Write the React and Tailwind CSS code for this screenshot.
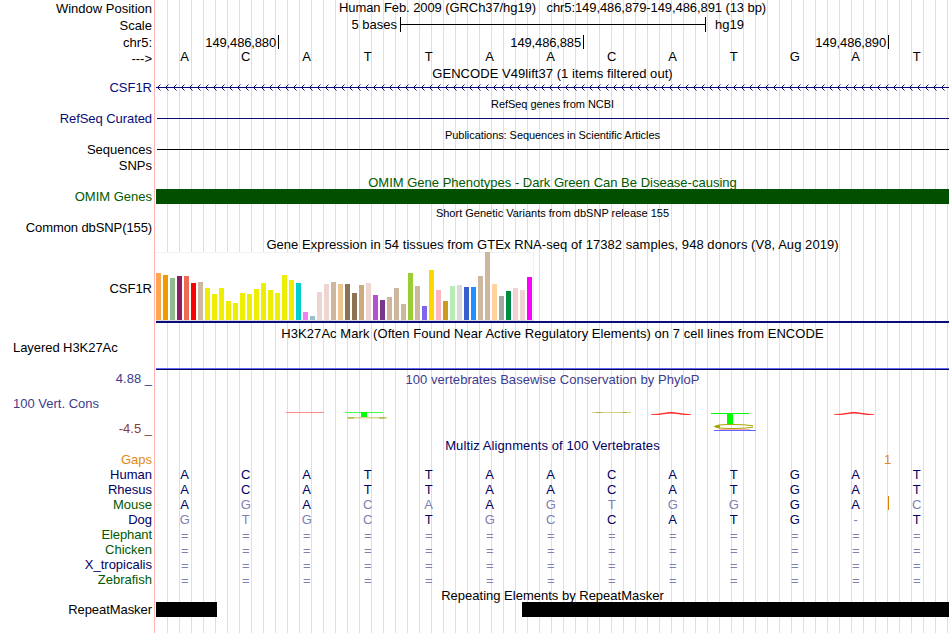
import React from "react";

const labels = [
  ["Window Position", "h-[17px]", "text-black"],
  ["Scale", "h-[17px]", "text-black"],
  ["chr5:", "h-[16px]", "text-black"],
  ["--->", "h-[29px]", "text-black"],
  ["CSF1R", "h-[31px]", "text-[#0c0c78]"],
  ["RefSeq Curated", "h-[31px] tracking-[-0.07px]", "text-[#0c0c78]"],
  ["Sequences", "h-[16px]", "text-black"],
  ["SNPs", "h-[31px]", "text-black"],
  ["OMIM Genes", "h-[31px]", "text-[#005a00]"],
  ["Common dbSNP(155)", "h-[61px] tracking-[-0.1px]", "text-black"],
  ["CSF1R", "h-[59px]", "text-black"],
  ["Layered H3K27Ac", "h-[31px] pl-[13px] tracking-[-0.06px]", "text-black", true],
  ["4.88 _", "h-[25px]", "text-[#3c3c8c]"],
  ["100 Vert. Cons", "h-[25px] pl-[13px]", "text-[#3c3c8c]", true],
  ["-4.5 _", "h-[31px]", "text-[#8c3c3c]"],
  ["Gaps", "h-[15px]", "text-[#e08a10]"],
  ["Human", "h-[15px]", "text-[#000064]"],
  ["Rhesus", "h-[15px]", "text-[#000064]"],
  ["Mouse", "h-[15px]", "text-[#005a00]"],
  ["Dog", "h-[15px]", "text-[#000064]"],
  ["Elephant", "h-[15px] tracking-[-0.1px]", "text-[#005a00]"],
  ["Chicken", "h-[15px]", "text-[#005a00]"],
  ["X_tropicalis", "h-[15px]", "text-[#000064]"],
  ["Zebrafish", "h-[30px]", "text-[#005a00]"],
  ["RepeatMasker", "h-[15px] tracking-[-0.06px]", "text-black"],
];

const human = "ACATTAACATGAT";

// Upper case marks a base identical to human; lower case marks a mismatch.
const alignments = [
  "ACATTAACATGAT",
  "ACATTAACATGAT",
  "AgAcaAgtggGAc",
  "gtgcTgcCATG-T",
  "=============",
  "=============",
  "=============",
  "=============",
];

const tissues = [
  [47, "#ffa54f"], [45, "#ee9a00"], [42, "#8fbc8f"], [44, "#8b1c62"], [44, "#ee6a50"],
  [37, "#ff0000"], [38, "#cdb79e"], [32, "#eeee00"], [26, "#eeee00"], [32, "#eeee00"],
  [19, "#eeee00"], [17, "#eeee00"], [27, "#eeee00"], [26, "#eeee00"], [31, "#eeee00"],
  [37, "#eeee00"], [30, "#eeee00"], [27, "#eeee00"], [45, "#eeee00"], [40, "#eeee00"],
  [37, "#00cdcd"], [8, "#ee82ee"], [4, "#9ac0cd"], [28, "#eed5d2"], [36, "#eed5d2"],
  [38, "#cdb79e"], [36, "#eec591"], [36, "#8b7355"], [27, "#8b7355"], [35, "#cdaa7d"],
  [37, "#eed5d2"], [25, "#b452cd"], [20, "#7a378b"], [23, "#cdb79e"], [32, "#cdb79e"],
  [16, "#cdb79e"], [47, "#9acd32"], [34, "#cdb79e"], [14, "#7a67ee"], [50, "#ffd700"],
  [30, "#ffb6c1"], [19, "#cd9b1d"], [34, "#b4eeb4"], [35, "#d9d9d9"], [33, "#3a5fcd"],
  [33, "#1e90ff"], [44, "#cdb79e"], [68, "#cdb79e"], [36, "#ffd39b"], [24, "#a6a6a6"],
  [29, "#008b45"], [32, "#eed5d2"], [30, "#eed5d2"], [43, "#ff00ff"],
];

function Title({ children, className }) {
  return <div className={"text-center whitespace-pre " + className}>{children}</div>;
}

function Bases({ seq, className = "" }) {
  return (
    <div className={"grid h-[15px] grid-cols-13 " + className}>
      {seq.split("").map((c, i) => (
        <span
          key={i}
          className={
            "pr-[3.6px] text-center " +
            (c === "=" ? "pt-px " : "") +
            (c === "=" || c === "-" || c !== c.toUpperCase() ? "text-[#8080b2]" : "")
          }
        >
          {c.toUpperCase()}
        </span>
      ))}
    </div>
  );
}

function Coordinate({ children, className }) {
  return (
    <div className={"flex justify-end border-r border-black pr-[2px] tracking-[-0.15px] " + className}>{children}</div>
  );
}

export default function App() {
  const chevrons = Array.from({ length: 99 }, (_, i) => 1.5 + i * 8);
  return (
    <div className="flex h-[633px] w-[950px] overflow-hidden bg-white font-['Liberation_Sans',Arial,sans-serif] text-[13px] leading-[15px]">
      <div className="flex w-[155px] shrink-0 flex-col border-r border-[#ffb4b4] pt-px">
        {labels.map(([text, size, color, left], i) => (
          <div
            key={i}
            className={
              "shrink-0 whitespace-pre " + size + " " + color + (left ? " text-left" : " pr-[2px] text-right")
            }
          >
            {text}
          </div>
        ))}
      </div>

      <div className="ml-px flex w-[793px] shrink-0 flex-col bg-[linear-gradient(to_right,#dcdcfa_1px,transparent_1px)] bg-[length:12px_100%] bg-[position:11px_0] text-black">
        <Title className="h-[17px] tracking-[-0.085px]">{"Human Feb. 2009 (GRCh37/hg19)   chr5:149,486,879-149,486,891 (13 bp)"}</Title>

        <div className="flex h-[18px]">
          <div className="w-[244px] pr-[3px] text-right">5 bases</div>
          <div className="flex h-[15px] w-[306px] items-center border-x border-black">
            <div className="h-px w-full bg-black" />
          </div>
          <div className="pl-[9px]">hg19</div>
        </div>

        <div className="flex h-[14px]">
          <Coordinate className="w-[123px]">149,486,880</Coordinate>
          <Coordinate className="w-[305px]">149,486,885</Coordinate>
          <Coordinate className="w-[305px]">149,486,890</Coordinate>
        </div>

        <Bases seq={human} />
        <Title className="mt-[2px] h-[18px] tracking-[0.05px]">GENCODE V49lift37 (1 items filtered out)</Title>
        <svg className="block h-[7px] w-[793px]" viewBox="0 0 793 7">
          <path d="M0 3.5H793" stroke="#0c0c78" />
          {chevrons.map((x) => (
            <path key={x} d={`M${x + 3} 0.5L${x} 3.5L${x + 3} 6.5`} fill="none" stroke="#0c0c78" />
          ))}
        </svg>

        <Title className="mt-[7px] h-[20px] text-[11px] leading-[12px] tracking-[-0.05px]">RefSeq genes from NCBI</Title>
        <div className="ml-px h-px bg-[#0c0c78]" />
        <Title className="mt-[10px] h-[20px] text-[11px] leading-[12px] tracking-[-0.06px]">Publications: Sequences in Scientific Articles</Title>
        <div className="ml-px h-px bg-black" />

        <Title className="mt-[25px] h-[14px] text-[#005a00]">OMIM Gene Phenotypes - Dark Green Can Be Disease-causing</Title>
        <div className="h-[15px] bg-[#005000]" />
        <Title className="mt-[3px] h-[30px] text-[11px] leading-[12px]">Short Genetic Variants from dbSNP release 155</Title>

        <Title className="h-[15px] tracking-[0.055px]">Gene Expression in 54 tissues from GTEx RNA-seq of 17382 samples, 948 donors (V8, Aug 2019)</Title>
        <div className="flex h-[69px] w-[378px] items-end gap-[2px] border-b border-[#dcdcdc] bg-white shadow-[inset_-1px_1px_0_#f2f2f2]">
          {tissues.map(([h, color], i) => (
            <div key={i} className="w-[5px] shrink-0" style={{ height: h, backgroundColor: color }} />
          ))}
        </div>
        <div className="h-[2px] bg-[#0c0c78]" />

        <Title className="mt-[3px] h-[42px] tracking-[0.055px]">H3K27Ac Mark (Often Found Near Active Regulatory Elements) on 7 cell lines from ENCODE</Title>
        <div className="h-[2px] border-t border-[#6464ff] bg-[#0a0a50]" />

        <Title className="mt-[2px] h-[33px] tracking-[0.04px] text-[#3c3c8c]">100 vertebrates Basewise Conservation by PhyloP</Title>
        <svg className="block h-[33px] w-[793px]" viewBox="156 405 793 33">
          <path d="M286 412.5H324" stroke="#ff8c8c" />
          <path d="M345 412.5H383" stroke="#46ff46" />
          <path d="M361 412H367V417H361Z" fill="#00ff00" />
          <path d="M347 417.8H387" stroke="#c3c35a" />
          <path d="M348 418H354M379 418H385" stroke="#a5a514" />
          <path d="M592 412.5H631" stroke="#d2d28c" />
          <path d="M596 412.5H602M622 412.5H627" stroke="#b4b446" />
          <path d="M651 414.5Q661 414 666 412.8Q671 411.8 676 412.8Q682 414 691 414.5Q682 415 676 413.6Q671 412.8 666 413.6Q661 415 651 414.5Z" fill="#ff0000" stroke="#ff0000" strokeWidth="0.4" />
          <path d="M834 414.5Q844 414 849 412.8Q854 411.8 859 412.8Q865 414 874 414.5Q865 415 859 413.6Q854 412.8 849 413.6Q844 415 834 414.5Z" fill="#ff0000" stroke="#ff0000" strokeWidth="0.4" />
          <path d="M711 413.5H749" stroke="#00ff00" />
          <path d="M727 413H733V424H727Z" fill="#00ff00" />
          <path d="M753 425.8Q745 424.5 733 424.5Q715 424.5 715 426.5Q715 428.5 733 428.5Q745 428.5 753 427.2" fill="none" stroke="#a5a500" />
          <path d="M713 426.5L720 424.8V428.2Z" fill="#a5a500" />
          <path d="M719 429.5H750" stroke="#ffaaaa" />
          <path d="M714 430.5H756" stroke="#6464ff" />
        </svg>

        <Title className="h-[14px] tracking-[0.1px] text-[#000064]">Multiz Alignments of 100 Vertebrates</Title>
        <div className="h-[15px] pl-[728px] text-[#e08a10]">1</div>
        <div className="relative text-[#000064]">
          {alignments.map((seq, i) => (
            <Bases key={i} seq={seq} />
          ))}
          <div className="absolute top-[29px] left-[732px] h-[14px] w-px bg-[#e08000]" />
        </div>
        <Title className="mt-px h-[14px]">Repeating Elements by RepeatMasker</Title>
        <div className="flex h-[15px] justify-between">
          <div className="w-[61px] bg-black" />
          <div className="w-[427px] bg-black" />
        </div>
      </div>
    </div>
  );
}
